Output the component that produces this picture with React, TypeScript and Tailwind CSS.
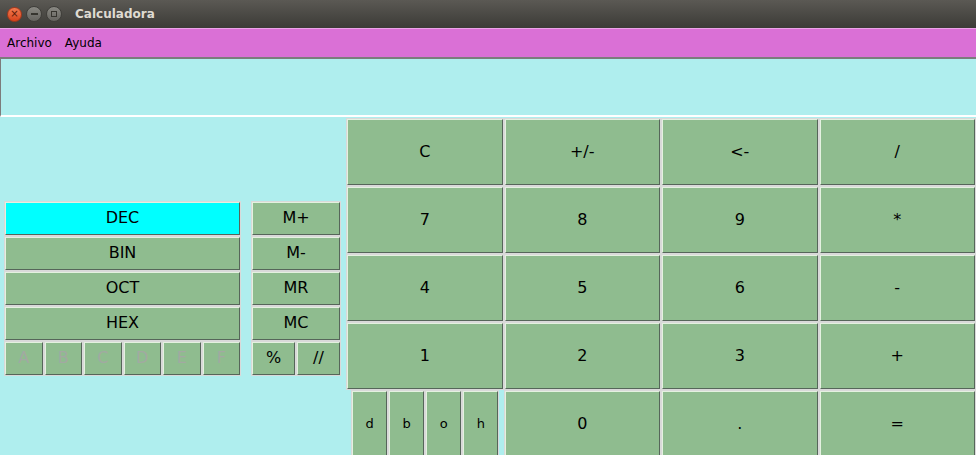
import React from 'react';

const font = { fontFamily: '"DejaVu Sans", "Liberation Sans", sans-serif' };

interface BtnProps {
  label: string;
  className?: string;
  active?: boolean;
  disabled?: boolean;
  small?: boolean;
}

// Tk-style raised button: grey highlight ring + light/dark bevel
function Btn({ label, className = '', active = false, disabled = false, small = false }: BtnProps) {
  return (
    <div className={`border border-[#d9d9d9] flex ${className}`}>
      <button
        type="button"
        className={`flex-1 flex items-center justify-center border-t border-l border-b border-r border-t-[#e4f1e0] border-l-[#e4f1e0] border-b-[#56665a] border-r-[#56665a] ${
          active ? 'bg-[#00ffff]' : 'bg-[#8fbc8f]'
        } ${disabled ? 'text-[#a2a9a2]' : 'text-black'} ${small ? 'text-[13px]' : 'text-[16px]'}`}
      >
        {label}
      </button>
    </div>
  );
}

const keypad = [
  ['C', '+/-', '<-', '/'],
  ['7', '8', '9', '*'],
  ['4', '5', '6', '-'],
  ['1', '2', '3', '+'],
];

export default function App() {
  return (
    <div className="w-[976px] h-[455px] overflow-hidden flex flex-col bg-[#afeeee]" style={font}>
      {/* ── Title bar ── */}
      <div className="h-[28px] flex items-center bg-gradient-to-b from-[#5b5954] to-[#3c3b37] flex-shrink-0">
        <div className="flex items-center gap-[4px] ml-[7px]">
          <div className="w-[15px] h-[15px] rounded-full bg-gradient-to-b from-[#f27a4f] to-[#d7431a] border border-[#a8371a] flex items-center justify-center text-[10px] leading-none text-[#5a1a08]">
            ×
          </div>
          <div className="w-[16px] h-[16px] rounded-full bg-gradient-to-b from-[#8a8983] to-[#65645f] border border-[#3f3e3a] flex items-center justify-center">
            <div className="w-[7px] h-[2px] bg-[#36352f]" />
          </div>
          <div className="w-[16px] h-[16px] rounded-full bg-gradient-to-b from-[#8a8983] to-[#65645f] border border-[#3f3e3a] flex items-center justify-center">
            <div className="w-[6px] h-[6px] border border-[#36352f]" />
          </div>
        </div>
        <span className="ml-[13px] text-[12px] font-bold text-[#dfdbd2]">Calculadora</span>
      </div>

      {/* ── Menu ── */}
      <div className="h-[29px] flex items-center gap-[13px] pl-[7px] bg-[#da70d6] border-t border-[#eba3e8] text-[12px] text-black flex-shrink-0">
        <span>Archivo</span>
        <span>Ayuda</span>
      </div>

      {/* ── Display ── */}
      <div className="h-[60px] flex-shrink-0 border-t-2 border-l border-t-[#7c7c7c] border-l-[#7c7c7c] border-b-2 border-b-white bg-[#afeeee]" />

      {/* ── Body ── */}
      <div className="flex pt-[1px] flex-shrink-0">
        {/* Left panel */}
        <div className="w-[346px] flex items-center flex-shrink-0">
          <div className="flex ml-[4px] gap-[10px]">
            <div className="w-[237px] flex flex-col">
              <Btn label="DEC" active className="h-[35px]" />
              <Btn label="BIN" className="h-[35px]" />
              <Btn label="OCT" className="h-[35px]" />
              <Btn label="HEX" className="h-[35px]" />
              <div className="flex h-[35px]">
                {['A', 'B', 'C', 'D', 'E', 'F'].map((l) => (
                  <Btn key={l} label={l} disabled className="flex-1" />
                ))}
              </div>
            </div>
            <div className="w-[90px] flex flex-col">
              <Btn label="M+" className="h-[35px]" />
              <Btn label="M-" className="h-[35px]" />
              <Btn label="MR" className="h-[35px]" />
              <Btn label="MC" className="h-[35px]" />
              <div className="flex h-[35px]">
                <Btn label="%" className="flex-1" />
                <Btn label="//" className="flex-1" />
              </div>
            </div>
          </div>
        </div>

        {/* Keypad */}
        <div className="w-[630px] grid grid-cols-4 auto-rows-[68px]">
          {keypad.flat().map((k) => (
            <Btn key={k} label={k} />
          ))}
          <div className="flex justify-center pl-[1px]">
            {['d', 'b', 'o', 'h'].map((l) => (
              <Btn key={l} label={l} small className="w-[37px]" />
            ))}
          </div>
          <Btn label="0" />
          <Btn label="." />
          <Btn label="=" />
        </div>
      </div>
    </div>
  );
}
